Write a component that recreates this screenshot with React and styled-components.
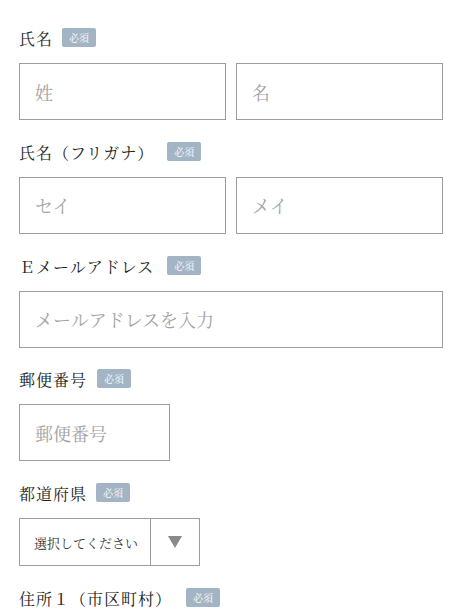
import React from 'react'
import styled, { createGlobalStyle } from 'styled-components'

const GlobalStyle = createGlobalStyle`
    body {
        margin: 0;
        background: #fff;
        font-family: 'Noto Serif CJK JP', 'Liberation Serif', 'Noto Sans CJK JP', serif;
        color: #222;
    }
`

const Form = styled.form`
    padding: 28px 0 0 19px;
    width: 424px;
`

const Field = styled.div`
    margin-bottom: 21.75px;
`

const LabelRow = styled.div`
    display: flex;
    align-items: center;
    height: 19px;
    margin-bottom: 16px;
`

const LabelText = styled.span`
    font-size: 16px;
    letter-spacing: 1px;
    line-height: 19px;
    margin-top: 2px;
`

const Badge = styled.span`
    display: inline-flex;
    align-items: center;
    justify-content: center;
    width: 34px;
    height: 19px;
    margin-left: ${({ $gap }) => $gap || 9}px;
    background: #a3b5c5;
    color: #fff;
    font-size: 10px;
    border-radius: 2px;
`

const Row = styled.div`
    display: flex;
    gap: 10px;
`

const Input = styled.input`
    box-sizing: border-box;
    width: ${({ $width }) => $width || 207}px;
    height: 57px;
    padding: 0 15px;
    border: 1px solid #9d9d9d;
    border-radius: 0;
    font-family: inherit;
    font-size: 18px;
    color: #333;
    outline: none;

    &::placeholder {
        color: #a3a3a3;
    }
`

const SelectBox = styled.div`
    display: flex;
    box-sizing: border-box;
    width: 181px;
    height: 48px;
    border: 1px solid #9d9d9d;
`

const Select = styled.select`
    appearance: none;
    flex: 1;
    border: none;
    background: transparent;
    padding: 0 0 0 14px;
    font-family: inherit;
    font-size: 13px;
    color: #333;
    outline: none;
`

const ArrowCell = styled.div`
    width: 48px;
    display: flex;
    align-items: center;
    justify-content: center;
    border-left: 1px solid #9d9d9d;
`

const Required = ({ gap }) => <Badge $gap={gap}>必須</Badge>

const Label = ({ children, gap }) => (
    <LabelRow>
        <LabelText>{children}</LabelText>
        <Required gap={gap} />
    </LabelRow>
)

export default function App() {
    return (
        <>
            <GlobalStyle />
            <Form>
                <Field>
                    <Label>氏名</Label>
                    <Row>
                        <Input placeholder='姓' />
                        <Input placeholder='名' />
                    </Row>
                </Field>
                <Field>
                    <Label gap={13}>氏名（フリガナ）</Label>
                    <Row>
                        <Input placeholder='セイ' />
                        <Input placeholder='メイ' />
                    </Row>
                </Field>
                <Field>
                    <Label gap={13}>Ｅメールアドレス</Label>
                    <Input $width={424} placeholder='メールアドレスを入力' />
                </Field>
                <Field>
                    <Label gap={10}>郵便番号</Label>
                    <Input $width={151} placeholder='郵便番号' />
                </Field>
                <Field>
                    <Label>都道府県</Label>
                    <SelectBox>
                        <Select defaultValue=''>
                            <option value=''>選択してください</option>
                        </Select>
                        <ArrowCell>
                            <svg width='14' height='12' viewBox='0 0 14 12'>
                                <path d='M0 0 H14 L7 12 Z' fill='#8a8a8a' />
                            </svg>
                        </ArrowCell>
                    </SelectBox>
                </Field>
                <Field>
                    <Label gap={14}>住所１（市区町村）</Label>
                </Field>
            </Form>
        </>
    )
}
